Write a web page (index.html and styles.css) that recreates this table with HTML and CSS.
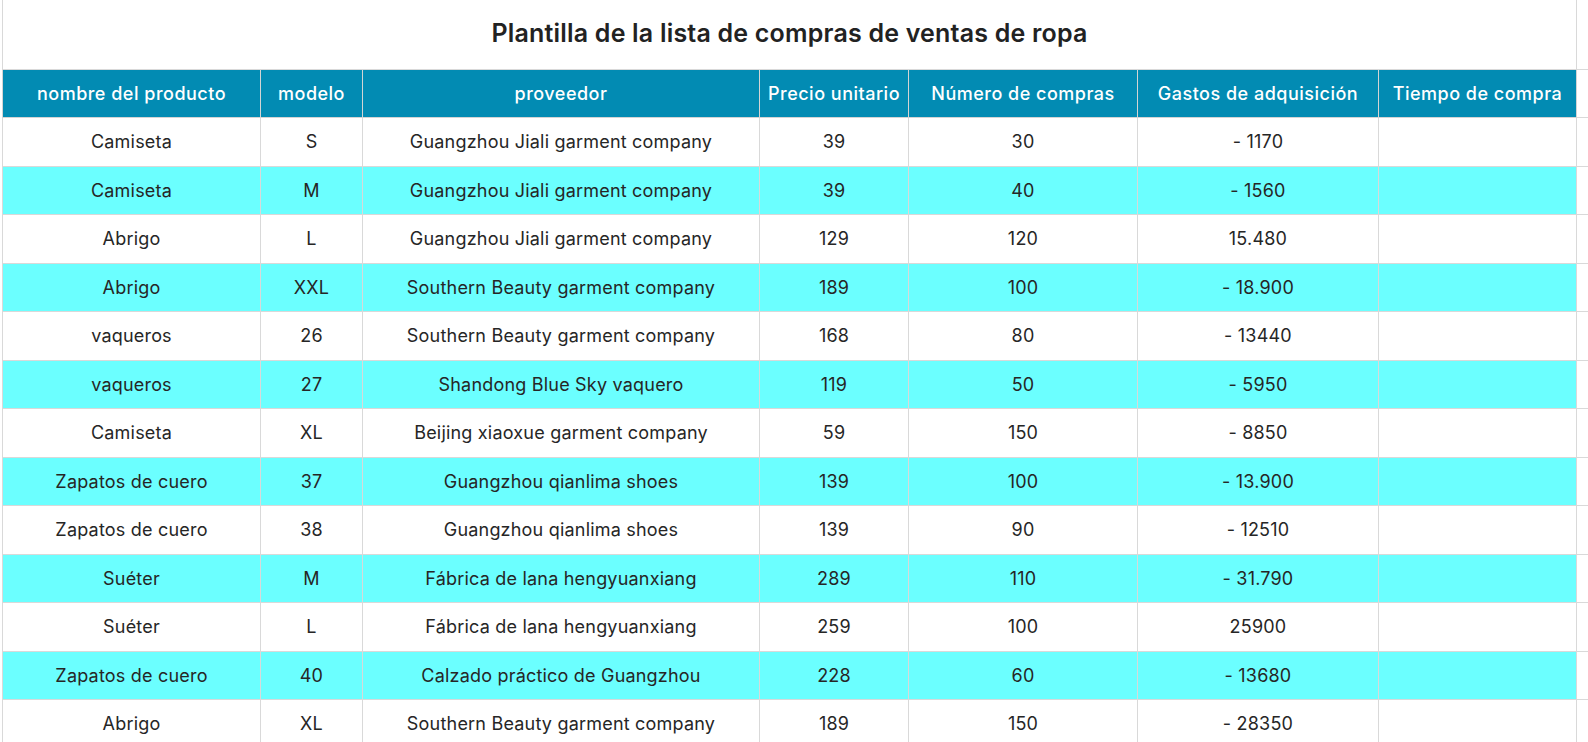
FILE: index.html
```html
<!DOCTYPE html>
<html lang="es">
<head>
<meta charset="utf-8">
<title>Plantilla de la lista de compras de ventas de ropa</title>
<link rel="stylesheet" href="styles.css">
</head>
<body>
<div class="sheet">
  <div class="grid">
    <div class="cell title">Plantilla de la lista de compras de ventas de ropa</div>
    <div class="cell extra"></div>

    <div class="cell head first">nombre del producto</div>
    <div class="cell head">modelo</div>
    <div class="cell head">proveedor</div>
    <div class="cell head">Precio unitario</div>
    <div class="cell head">Número de compras</div>
    <div class="cell head">Gastos de adquisición</div>
    <div class="cell head">Tiempo de compra</div>
    <div class="cell extra"></div>

    <div class="cell first">Camiseta</div><div class="cell">S</div><div class="cell">Guangzhou Jiali garment company</div><div class="cell">39</div><div class="cell">30</div><div class="cell">- 1170</div><div class="cell"></div><div class="cell extra"></div>

    <div class="cell first alt">Camiseta</div><div class="cell alt">M</div><div class="cell alt">Guangzhou Jiali garment company</div><div class="cell alt">39</div><div class="cell alt">40</div><div class="cell alt">- 1560</div><div class="cell alt"></div><div class="cell extra"></div>

    <div class="cell first">Abrigo</div><div class="cell">L</div><div class="cell">Guangzhou Jiali garment company</div><div class="cell">129</div><div class="cell">120</div><div class="cell">15.480</div><div class="cell"></div><div class="cell extra"></div>

    <div class="cell first alt">Abrigo</div><div class="cell alt">XXL</div><div class="cell alt">Southern Beauty garment company</div><div class="cell alt">189</div><div class="cell alt">100</div><div class="cell alt">- 18.900</div><div class="cell alt"></div><div class="cell extra"></div>

    <div class="cell first">vaqueros</div><div class="cell">26</div><div class="cell">Southern Beauty garment company</div><div class="cell">168</div><div class="cell">80</div><div class="cell">- 13440</div><div class="cell"></div><div class="cell extra"></div>

    <div class="cell first alt">vaqueros</div><div class="cell alt">27</div><div class="cell alt">Shandong Blue Sky vaquero</div><div class="cell alt">119</div><div class="cell alt">50</div><div class="cell alt">- 5950</div><div class="cell alt"></div><div class="cell extra"></div>

    <div class="cell first">Camiseta</div><div class="cell">XL</div><div class="cell">Beijing xiaoxue garment company</div><div class="cell">59</div><div class="cell">150</div><div class="cell">- 8850</div><div class="cell"></div><div class="cell extra"></div>

    <div class="cell first alt">Zapatos de cuero</div><div class="cell alt">37</div><div class="cell alt">Guangzhou qianlima shoes</div><div class="cell alt">139</div><div class="cell alt">100</div><div class="cell alt">- 13.900</div><div class="cell alt"></div><div class="cell extra"></div>

    <div class="cell first">Zapatos de cuero</div><div class="cell">38</div><div class="cell">Guangzhou qianlima shoes</div><div class="cell">139</div><div class="cell">90</div><div class="cell">- 12510</div><div class="cell"></div><div class="cell extra"></div>

    <div class="cell first alt">Suéter</div><div class="cell alt">M</div><div class="cell alt">Fábrica de lana hengyuanxiang</div><div class="cell alt">289</div><div class="cell alt">110</div><div class="cell alt">- 31.790</div><div class="cell alt"></div><div class="cell extra"></div>

    <div class="cell first">Suéter</div><div class="cell">L</div><div class="cell">Fábrica de lana hengyuanxiang</div><div class="cell">259</div><div class="cell">100</div><div class="cell">25900</div><div class="cell"></div><div class="cell extra"></div>

    <div class="cell first alt">Zapatos de cuero</div><div class="cell alt">40</div><div class="cell alt">Calzado práctico de Guangzhou</div><div class="cell alt">228</div><div class="cell alt">60</div><div class="cell alt">- 13680</div><div class="cell alt"></div><div class="cell extra"></div>

    <div class="cell first">Abrigo</div><div class="cell">XL</div><div class="cell">Southern Beauty garment company</div><div class="cell">189</div><div class="cell">150</div><div class="cell">- 28350</div><div class="cell"></div><div class="cell extra"></div>
  </div>
</div>
</body>
</html>
```

FILE: styles.css
```css
html, body {
  margin: 0;
  padding: 0;
  background: #ffffff;
  overflow: hidden;
}

body {
  font-family: Inter, "Noto Sans", "Liberation Sans", sans-serif;
  color: #262626;
}

.sheet {
  padding-left: 2px;
  width: 1600px;
}

.grid {
  display: grid;
  grid-template-columns: 259px 102px 397px 149px 229px 241px 198px 30px;
  grid-template-rows: 70px 48px repeat(13, 48.5px);
}

.cell {
  box-sizing: border-box;
  border-right: 1px solid #d9d9d9;
  border-bottom: 1px solid #d9d9d9;
  display: flex;
  align-items: center;
  justify-content: center;
  font-size: 18px;
  letter-spacing: 0.2px;
  white-space: nowrap;
  overflow: hidden;
}

.first {
  border-left: 1px solid #d9d9d9;
}

.title {
  grid-column: 1 / 8;
  border-left: 1px solid #d9d9d9;
  font-size: 25px;
  font-weight: 600;
  letter-spacing: 0.2px;
  color: #222222;
  padding-bottom: 4px;
}

.head {
  background: #028bb3;
  color: #ffffff;
  font-weight: 500;
  letter-spacing: 0.5px;
  border-color: #d4d4d4;
}

.alt {
  background: #6bffff;
}

.extra {
  border-right: none;
}
```
